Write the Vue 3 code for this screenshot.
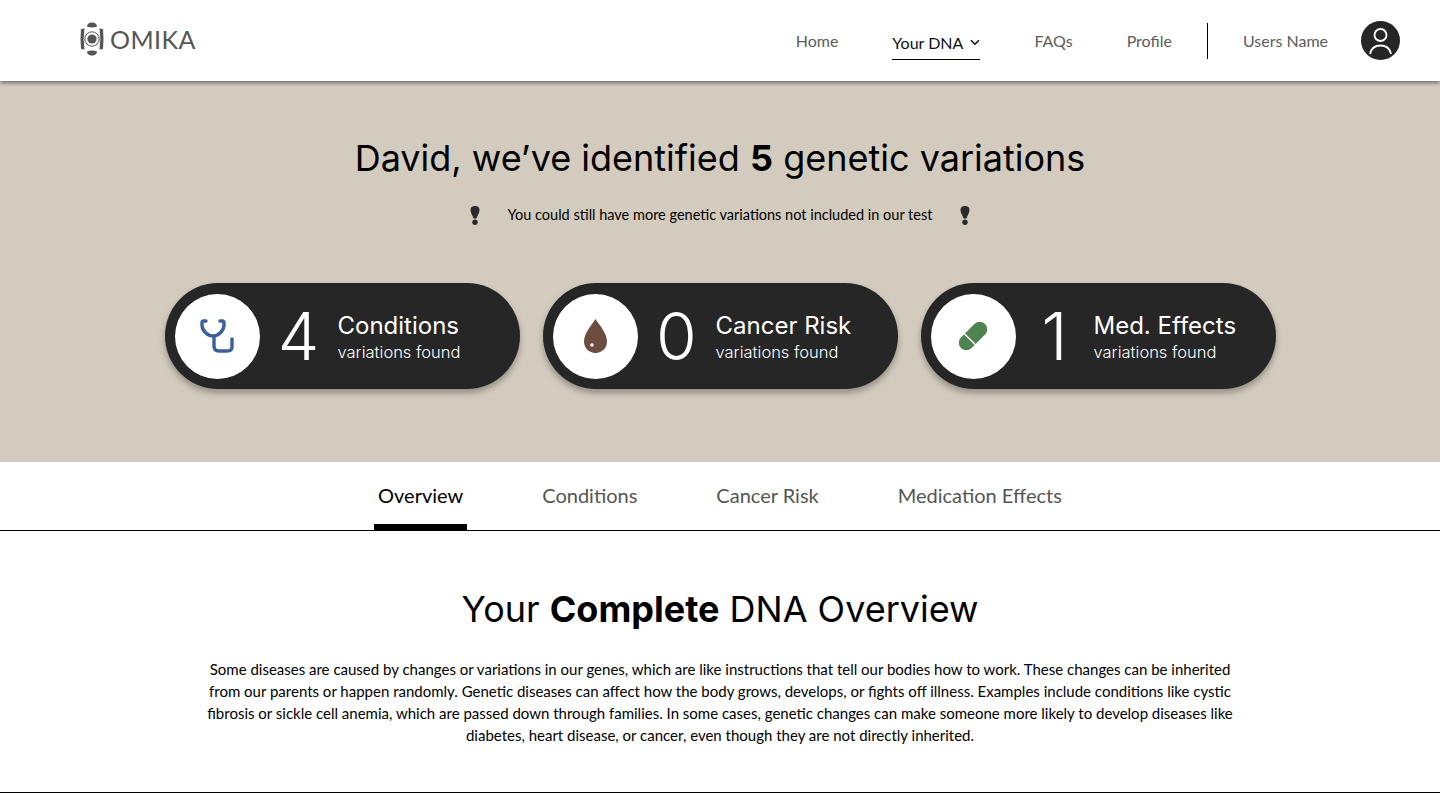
<template>
  <div class="page">
    <header class="topbar">
      <div class="logo">
        <svg class="logo-mark" width="24" height="34" viewBox="0 0 24 34">
          <path d="M7 4.5C7 2 9.5 0.5 12 0.5S17 2 17 4.5Q12 6.5 7 4.5Z" fill="#555" />
          <path d="M7 29.5C7 32 9.5 33.5 12 33.5S17 32 17 29.5Q12 27.500 7 29.5Z" fill="#555" />
          <circle cx="12" cy="17" r="4.6" fill="#555" />
          <path d="M1 7L4.500 6.500Q2.800 17 4.500 27.500L1 27Q0 17 1 7Z" fill="#555" />
          <path d="M23 7L19.500 6.500Q21.200 17 19.500 27.500L23 27Q24 17 23 7Z" fill="#555" />
          <circle cx="12" cy="17" r="7.200" fill="none" stroke="#555" stroke-width="1" />
        </svg>
        <span class="logo-text">OMIKA</span>
      </div>
      <nav class="nav">
        <a class="nav-link">Home</a>
        <a class="nav-link active">
          Your DNA
          <svg width="10" height="7" viewBox="0 0 10 7">
            <path d="M1 1.200L5 5.200L9 1.200" fill="none" stroke="#111" stroke-width="1.600" />
          </svg>
        </a>
        <a class="nav-link">FAQs</a>
        <a class="nav-link">Profile</a>
        <span class="nav-divider"></span>
        <a class="nav-link">Users Name</a>
        <svg class="avatar" width="39" height="39" viewBox="0 0 39 39">
          <circle cx="19.500" cy="19.500" r="19.500" fill="#262626" />
          <circle cx="19.500" cy="14" r="6" fill="none" stroke="#fff" stroke-width="1.800" />
          <path d="M9 33C10.500 26 15 24.500 19.500 24.500S28.500 26 30 33" fill="none" stroke="#fff" stroke-width="1.800" />
        </svg>
      </nav>
    </header>

    <section class="hero">
      <h1 class="hero-title">David, we’ve identified <b>5</b> genetic variations</h1>
      <div class="hero-note">
        <svg width="10" height="19" viewBox="0 0 10 19">
          <path d="M5 0C8 0 9.500 1.500 9.500 4C9.500 7 7 10 6.500 12.500H3.500C3 10 .5 7 .5 4C.5 1.500 2 0 5 0Z" fill="#2a2a2a" />
          <circle cx="5" cy="16.300" r="2.700" fill="#2a2a2a" />
        </svg>
        <span>You could still have more genetic variations not included in our test</span>
        <svg width="10" height="19" viewBox="0 0 10 19">
          <path d="M5 0C8 0 9.500 1.500 9.500 4C9.500 7 7 10 6.500 12.500H3.500C3 10 .5 7 .5 4C.5 1.500 2 0 5 0Z" fill="#2a2a2a" />
          <circle cx="5" cy="16.300" r="2.700" fill="#2a2a2a" />
        </svg>
      </div>
      <div class="stats">
        <div v-for="s in stats" :key="s.label" class="stat">
          <div class="stat-icon">
            <svg v-if="s.icon === 'steth'" width="34" height="34" viewBox="0 0 34 34">
              <path d="M6 2H3.500Q2 2 2 4V6C2 12 8 17 13 17C18 17 24 12 24 6V4Q24 2 22.500 2H20M14 17V27Q14 32 19 32H27Q32 32 32 28V20" fill="none" stroke="#3b6098" stroke-width="3.400" stroke-linecap="round" />
            </svg>
            <svg v-else-if="s.icon === 'drop'" width="23" height="34" viewBox="0 0 23 34">
              <path d="M11.500 0C15 5.500 23 14 23 22.500C23 29 18 34 11.500 34S0 29 0 22.500C0 14 8 5.500 11.500 0Z" fill="#6b4c3f" />
              <circle cx="8" cy="26" r="1.700" fill="#fff" />
            </svg>
            <svg v-else width="28" height="28" viewBox="0 0 28 28">
              <g transform="rotate(-45 14 14)">
                <rect x="-3" y="6.500" width="34" height="15" rx="7.500" fill="#4f8350" />
                <path d="M9.500 6V22" stroke="#fff" stroke-width="1.500" />
              </g>
            </svg>
          </div>
          <div class="stat-count" :class="s.icon">{{ s.count }}</div>
          <div class="stat-text">
            <div class="stat-label">{{ s.label }}</div>
            <div class="stat-sub">variations found</div>
          </div>
        </div>
      </div>
    </section>

    <div class="tabs">
      <a class="tab active">Overview</a>
      <a class="tab">Conditions</a>
      <a class="tab">Cancer Risk</a>
      <a class="tab">Medication Effects</a>
    </div>

    <section class="overview">
      <h2 class="overview-title">Your <b>Complete</b> DNA Overview</h2>
      <p class="overview-text">
        Some diseases are caused by changes or variations in our genes, which are like instructions that tell our bodies how to work. These changes can be inherited<br />
        from our parents or happen randomly. Genetic diseases can affect how the body grows, develops, or fights off illness. Examples include conditions like cystic<br />
        fibrosis or sickle cell anemia, which are passed down through families. In some cases, genetic changes can make someone more likely to develop diseases like<br />
        diabetes, heart disease, or cancer, even though they are not directly inherited.
      </p>
    </section>
  </div>
</template>

<script setup>
const stats = [
  { icon: 'steth', count: 4, label: 'Conditions' },
  { icon: 'drop', count: 0, label: 'Cancer Risk' },
  { icon: 'pill', count: 1, label: 'Med. Effects' }
]
</script>

<style>
html,
body {
  margin: 0;
  background: #fff;
}
</style>

<style scoped>
.page {
  height: 793px;
  overflow: hidden;
  font-family: 'Lato', sans-serif;
  color: #000;
}

.topbar {
  position: relative;
  z-index: 1;
  height: 81px;
  box-sizing: border-box;
  padding: 0 40px 0 80px;
  display: flex;
  align-items: center;
  justify-content: space-between;
  background: #fff;
  box-shadow: 0 2px 4px rgba(0, 0, 0, 0.45);
}

.logo {
  display: flex;
  align-items: center;
  gap: 6px;
  margin-top: -4px;
}

.logo-text {
  font-family: 'Lato', sans-serif;
  font-size: 25px;
  letter-spacing: 0.4px;
  color: #555;
}

.nav {
  display: flex;
  align-items: center;
}

.nav-link {
  font-size: 16px;
  color: #5c5c5c;
  margin-left: 54px;
  line-height: 20px;
  white-space: nowrap;
}

.nav-link.active {
  display: flex;
  align-items: center;
  gap: 7px;
  color: #111;
  padding: 5px 0 6px;
  border-bottom: 1px solid #000;
  margin-top: 6px;
}

.nav-divider {
  width: 1px;
  height: 36px;
  background: #000;
  margin-left: 35px;
  margin-right: -19px;
}

.avatar {
  margin-left: 33px;
}

.hero {
  height: 381px;
  background: #d3cbbe;
  display: flex;
  flex-direction: column;
  align-items: center;
  box-sizing: border-box;
  padding-top: 50px;
}

.hero-title {
  margin: 0;
  font-family: 'Inter', sans-serif;
  font-weight: 400;
  font-size: 36px;
  line-height: 54px;
  white-space: nowrap;
}

.hero-title b {
  font-weight: 700;
}

.hero-note {
  display: flex;
  align-items: center;
  gap: 28px;
  margin-top: 20px;
  font-size: 14.500px;
  line-height: 20px;
}

.stats {
  display: flex;
  gap: 23px;
  margin-top: 58px;
}

.stat {
  width: 355px;
  height: 106px;
  box-sizing: border-box;
  padding: 10px;
  border-radius: 53px;
  display: flex;
  align-items: center;
  background: #262626;
  color: #fff;
  box-shadow: 0 4px 6px rgba(0, 0, 0, 0.3);
}

.stat-icon {
  width: 85px;
  height: 85px;
  flex: none;
  border-radius: 50%;
  background: #fff;
  display: flex;
  align-items: center;
  justify-content: center;
}

.stat-count {
  width: 78px;
  flex: none;
  text-align: center;
  font-family: 'Inter', sans-serif;
  font-weight: 300;
  font-size: 66px;
  line-height: 80px;
}

.stat-text {
  font-family: 'Inter', sans-serif;
}

.stat-label {
  font-size: 24px;
  line-height: 32px;
}

.stat-sub {
  font-size: 16.500px;
  font-weight: 300;
  line-height: 20px;
}

.tabs {
  height: 69px;
  box-sizing: border-box;
  border-bottom: 1px solid #000;
  display: flex;
  justify-content: center;
  gap: 71px;
  background: #fff;
}

.tab {
  padding: 21px 4px 0;
  font-size: 20px;
  line-height: 24px;
  color: #555;
  white-space: nowrap;
}

.tab.active {
  color: #000;
  border-bottom: 6px solid #000;
}

.overview {
  height: 262px;
  box-sizing: border-box;
  border-bottom: 1px solid #000;
  padding-top: 51px;
  text-align: center;
}

.overview-title {
  margin: 0;
  font-family: 'Inter', sans-serif;
  font-weight: 400;
  font-size: 36px;
  line-height: 54px;
}

.overview-title b {
  font-weight: 700;
}

.overview-text {
  margin: 22px 0 0;
  font-size: 15px;
  line-height: 22px;
  white-space: nowrap;
}
</style>
